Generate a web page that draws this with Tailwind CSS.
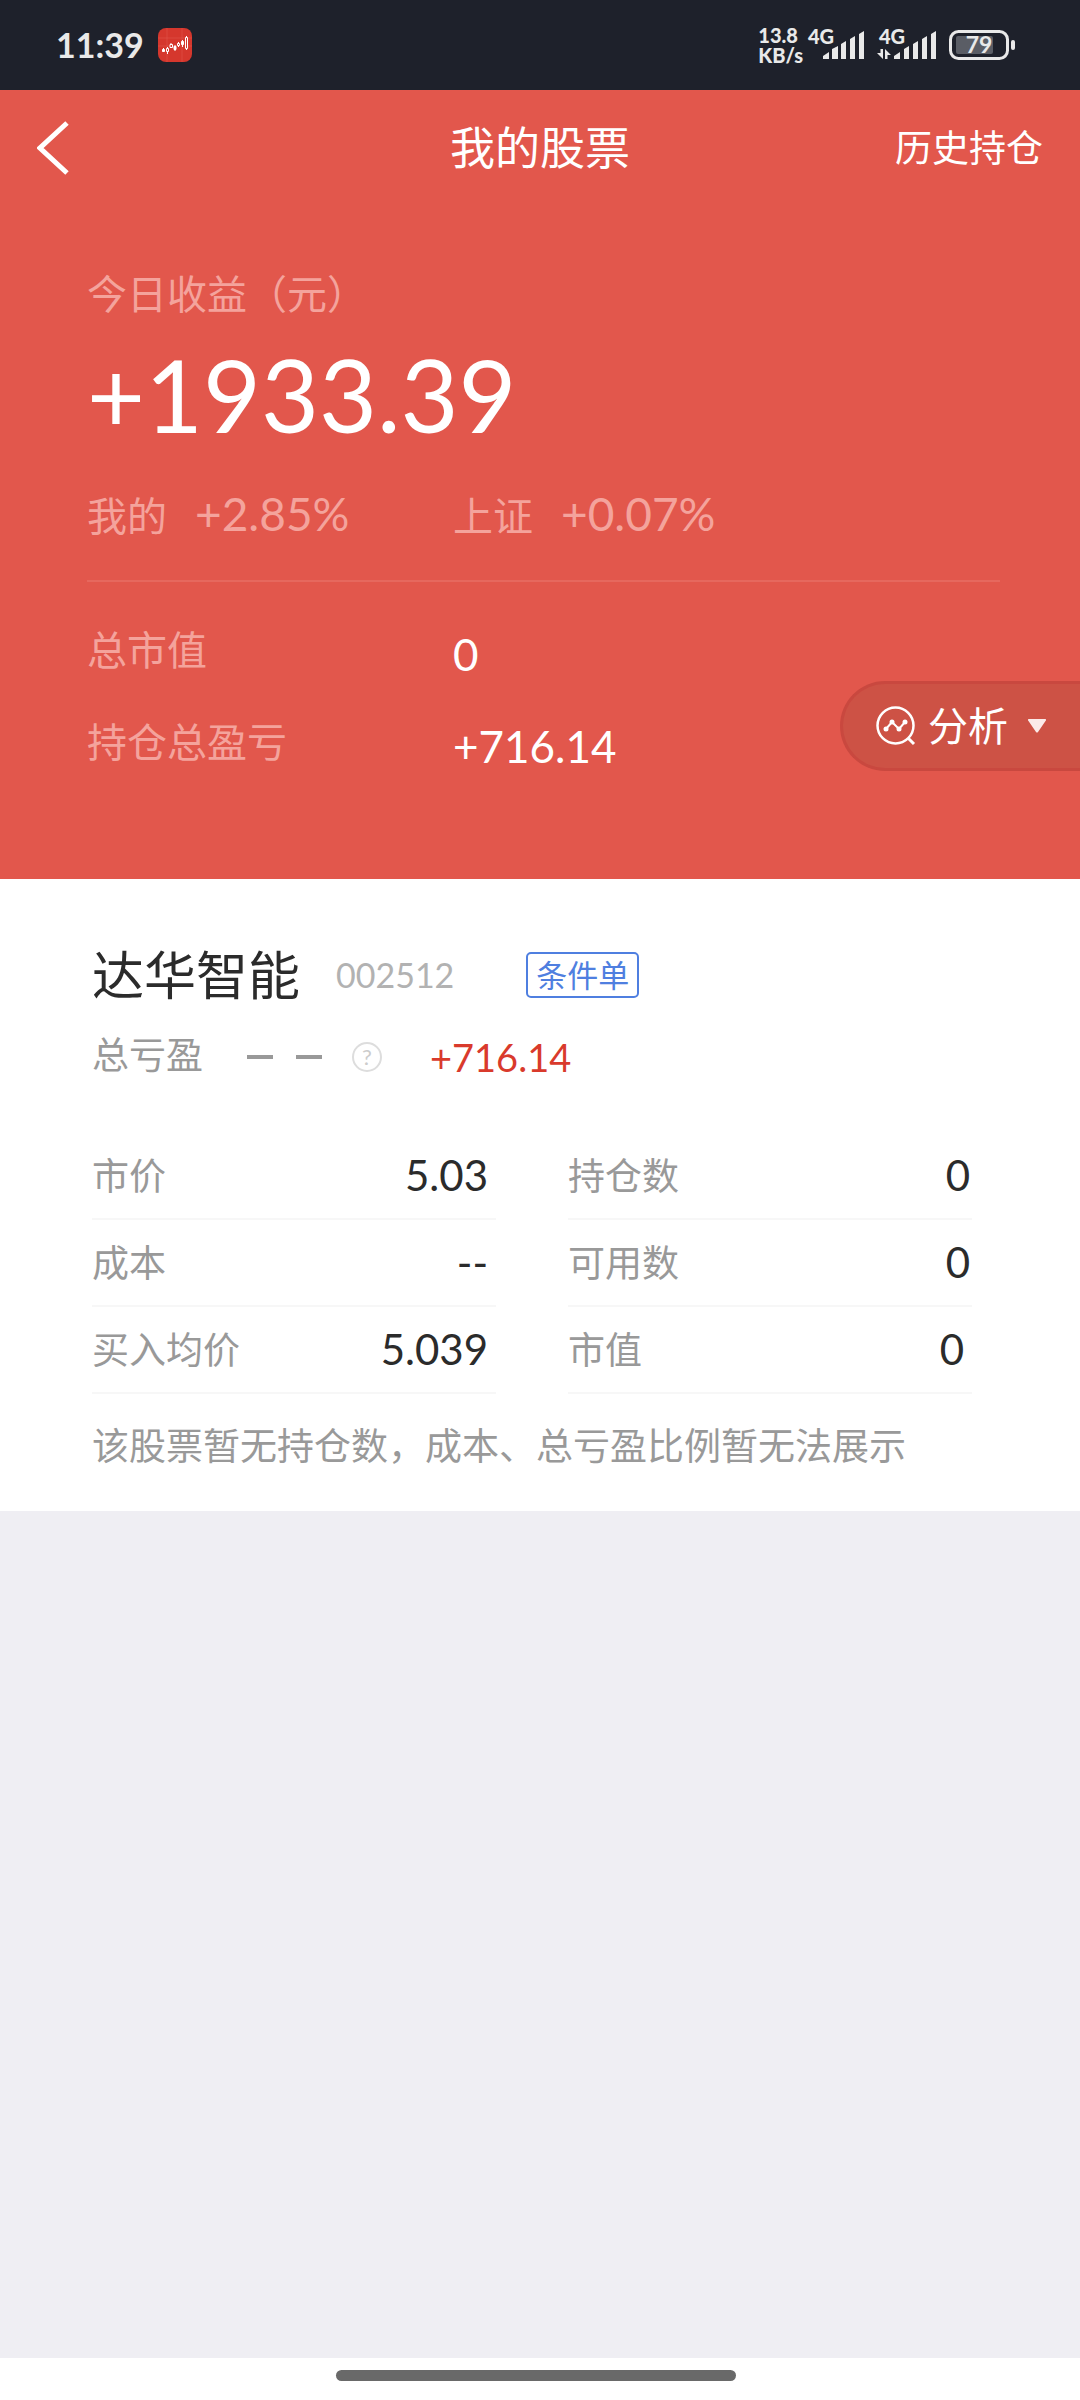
<!DOCTYPE html>
<html lang="zh-CN">
<head>
    <meta charset="UTF-8">
    <meta name="viewport" content="width=device-width, initial-scale=1.0">
    <title>我的股票</title>
    <script src="https://cdn.jsdelivr.net/npm/@tailwindcss/browser@4"></script>
</head>
<body class="flex min-h-screen flex-col bg-[#efeef3] font-['Lato','Noto_Sans_CJK_SC',sans-serif] text-[#2b2b2b]">

    <!-- Status bar -->
    <div class="flex h-[90px] items-center justify-between bg-[#1e212b] pr-[65px] pl-14 text-[#e9e9e9]">
        <div class="flex items-center gap-3.5">
            <span class="text-[34px] leading-10 font-bold">11:39</span>
            <svg class="size-[34px]" viewBox="0 0 34 34" fill="none" stroke="#fff">
                <rect width="34" height="34" rx="8" fill="#d5372d" stroke="none"/>
                <path d="M0 10h34M0 18h34M9 0v34M24 0v34" stroke="#e05a50" stroke-width=".5"/>
                <path d="M5.500 20v4M9.500 19v7M13 15v5M17 17v6M20.500 14v5M24.500 12v7M28.500 8v14"/>
                <path d="M4.500 21.500h2v2h-2zM16 18.500h2v3h-2zM23.500 13.500h2v3h-2z" fill="#fff"/>
                <path d="M8.500 20.500h2v3h-2zM12 16.500h2.500v3H12zM19.500 15.500h2v2h-2zM27.500 9.500h2v11h-2z" fill="#d5372d"/>
            </svg>
        </div>
        <div class="flex items-center">
            <div class="mr-1 text-[20px] leading-5 font-black">13.8<br>KB/s</div>
            <svg class="mr-2.5 h-11 w-[60px]" viewBox="0 -6 60 44" fill="currentColor">
                <text x="1" y="15" font-size="20" font-weight="900">4G</text>
                <path d="M16 27l6-4v7h-6zM25 20l6-3v13h-6zM34 15l5-3v18h-5zM43 10l5-3v23h-5zM52 5l5-3v28h-5z"/>
            </svg>
            <svg class="mr-2.5 h-11 w-[62px]" viewBox="0 -6 62 44" fill="currentColor">
                <text x="2" y="15" font-size="20" font-weight="900">4G</text>
                <path d="M0 24h3.500v-4H6v10zM8 20l6 6h-3.500v4H8zM17 27l6-4v7h-6zM27 20l5-3v13h-5zM36 15l5-3v18h-5zM45 10l5-3v23h-5zM54 5l5-3v28h-5z"/>
            </svg>
            <svg class="h-[30px] w-[66px]" viewBox="0 0 66 30" fill="none">
                <rect x="1.500" y="1.500" width="57" height="27" rx="8" stroke="currentColor" stroke-width="3"/>
                <rect x="7" y="6" width="37" height="18" rx="2" fill="#5a5d65"/>
                <rect x="62" y="10" width="4" height="10" rx="2" fill="currentColor"/>
                <text x="30" y="23" font-size="23" font-weight="700" text-anchor="middle" fill="currentColor">79</text>
            </svg>
        </div>
    </div>

    <!-- Header and today's profit -->
    <header class="relative h-[789px] bg-[#e2574c] text-white">
        <nav class="grid h-[116px] grid-cols-3 items-center px-[37px]">
            <button aria-label="返回" class="justify-self-start">
                <svg class="h-[54px] w-8" viewBox="0 0 32 54" fill="none" stroke="currentColor" stroke-width="5"><path d="M30 2L3 27l27 25"/></svg>
            </button>
            <h1 class="text-center text-[45px] leading-[60px]">我的股票</h1>
            <a href="#" class="justify-self-end text-[37px] leading-[60px]">历史持仓</a>
        </nav>

        <section class="mr-20 ml-[87px] pt-[58px]">
            <p class="text-[40px] leading-[60px] text-[#f4a39c]">今日收益（元）</p>
            <p class="text-[100px] leading-[140px]">+1933.39</p>
            <div class="mt-1 flex h-[114px] border-b-2 border-[#e6685e] pt-4 text-[#f4a39c]">
                <p class="flex w-[366px] items-baseline gap-7 text-[40px] leading-[60px]">我的<span class="text-[46px]">+2.85%</span></p>
                <p class="flex items-baseline gap-7 text-[40px] leading-[60px]">上证<span class="text-[46px]">+0.07%</span></p>
            </div>
            <dl class="grid grid-cols-[366px_1fr] items-start gap-y-6 pt-[38px] text-[40px] leading-[60px]">
                <dt class="text-[#f4a39c]">总市值</dt>
                <dd class="text-[44px] leading-[68px]">0</dd>
                <dt class="text-[#f4a39c]">持仓总盈亏</dt>
                <dd class="text-[44px] leading-[68px]">+716.14</dd>
            </dl>
        </section>

        <!-- Floating analysis tab, sits over the right edge -->
        <button class="absolute top-[591px] right-0 flex h-[90px] w-60 items-center rounded-l-full border-[3px] border-r-0 border-[#c9483f] bg-[#cd5245] pl-[33px] text-[40px] leading-[60px]">
            <svg class="mr-3 size-10" viewBox="0 0 40 40" fill="none" stroke="currentColor" stroke-width="2.500">
                <circle cx="19.500" cy="19.500" r="18"/>
                <path d="M32 32l6 6" stroke-width="3"/>
                <path d="M10 23l6-7 7 7 6-7" stroke-width="2"/>
                <g fill="currentColor" stroke="none"><circle cx="10" cy="23" r="2.500"/><circle cx="16" cy="16" r="2.500"/><circle cx="23" cy="23" r="2.500"/><circle cx="29" cy="16" r="2.500"/></g>
            </svg>
            分析
            <svg class="ml-5 h-3.5 w-[18px]" viewBox="0 0 18 14" fill="#fbeae8"><path d="M1 0h16q2 0 .5 2L10 13q-1 1-2 0L.5 2Q-1 0 1 0z"/></svg>
        </button>
    </header>

    <!-- Holding card -->
    <main class="h-[632px] bg-white px-[92px] pt-[60px]">
        <div class="flex h-[72px] items-center">
            <h2 class="text-[52px] leading-[72px]">达华智能</h2>
            <span class="ml-9 text-[34px] leading-[72px] text-[#b2b2b2]">002512</span>
            <button class="ml-[72px] h-[46px] rounded-[5px] border-2 border-[#4f7fe0] px-2 text-[31px] leading-[42px] text-[#4f7fe0]">条件单</button>
        </div>
        <div class="mt-2 flex h-[72px] items-center text-[37px] leading-[56px] text-[#999]">
            <span>总亏盈</span>
            <div class="flex items-center pt-1">
                <span class="ml-11 flex gap-[23px]" role="img" aria-label="--">
                    <i class="h-1 w-[26px] bg-[#999]"></i>
                    <i class="h-1 w-[26px] bg-[#999]"></i>
                </span>
                <button aria-label="说明" class="ml-[30px] flex size-[30px] items-center justify-center rounded-full border-2 border-[#ddd] text-[22px] leading-6 text-[#ccc]">?</button>
                <span class="ml-12 text-[38px]/[56px] text-[#d93a2c]">+716.14</span>
            </div>
        </div>

        <div class="mt-[42px] flex gap-[72px] text-[37px]">
            <dl class="w-[404px] text-[#999]">
                <div class="flex h-[87px] items-center justify-between border-b-2 border-[#f7f7f7] pr-2">
                    <dt>市价</dt>
                    <dd class="text-[42px] text-[#2b2b2b]">5.03</dd>
                </div>
                <div class="flex h-[87px] items-center justify-between border-b-2 border-[#f7f7f7] pr-2">
                    <dt>成本</dt>
                    <dd class="text-[42px] text-[#2b2b2b]">--</dd>
                </div>
                <div class="flex h-[87px] items-center justify-between border-b-2 border-[#f7f7f7] pr-2">
                    <dt>买入均价</dt>
                    <dd class="text-[42px] text-[#2b2b2b]">5.039</dd>
                </div>
            </dl>
            <dl class="w-[404px] text-[#999]">
                <div class="flex h-[87px] items-center justify-between border-b-2 border-[#f7f7f7] pr-0.5">
                    <dt>持仓数</dt>
                    <dd class="text-[42px] text-[#2b2b2b]">0</dd>
                </div>
                <div class="flex h-[87px] items-center justify-between border-b-2 border-[#f7f7f7] pr-0.5">
                    <dt>可用数</dt>
                    <dd class="text-[42px] text-[#2b2b2b]">0</dd>
                </div>
                <div class="flex h-[87px] items-center justify-between border-b-2 border-[#f7f7f7] pr-2">
                    <dt>市值</dt>
                    <dd class="text-[42px] text-[#2b2b2b]">0</dd>
                </div>
            </dl>
        </div>
        <p class="mt-6 text-[37px] leading-[56px] text-[#999]">该股票暂无持仓数，成本、总亏盈比例暂无法展示</p>
    </main>

    <!-- Gesture bar -->
    <div class="mt-auto flex h-[42px] justify-center bg-white pt-3 pr-2">
        <div class="h-[11px] w-[400px] rounded-full bg-[#696969]"></div>
    </div>
</body>
</html>
